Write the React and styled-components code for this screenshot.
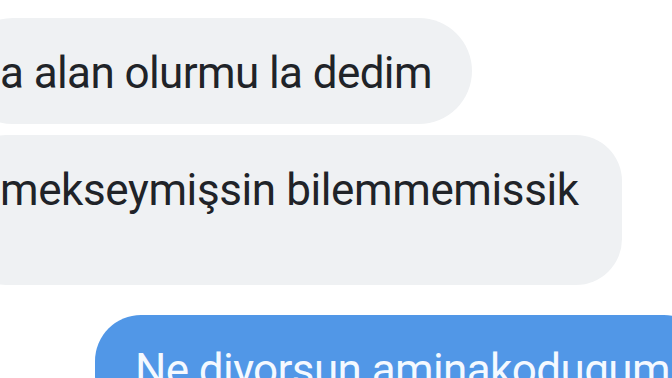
import React from 'react';
import styled, { createGlobalStyle } from 'styled-components';

const GlobalStyle = createGlobalStyle`
  html, body {
    margin: 0;
    padding: 0;
    background: #ffffff;
    overflow: hidden;
  }
  body {
    font-family: Roboto, "Noto Sans", sans-serif;
  }
`;

const Thread = styled.div`
  width: 672px;
  height: 378px;
  overflow: hidden;
  padding-top: 18px;
  box-sizing: border-box;
  display: flex;
  flex-direction: column;
`;

const Row = styled.div`
  display: flex;
  justify-content: flex-start;
  margin-top: ${(p) => p.gap || 0}px;
`;

const Bubble = styled.div`
  flex-shrink: 0;
  white-space: nowrap;
  font-size: 44px;
  line-height: 44px;
  letter-spacing: ${(p) => p.spacing ?? -0.6}px;
  padding: 33px ${(p) => p.padRight || 40}px ${(p) => 29 + (p.extra || 0)}px 40px;
  margin-left: ${(p) => p.offset || 0}px;
  border-radius: ${(p) => p.radius || 46}px;
  background: ${(p) => (p.mine ? '#5197e7' : '#eff1f3')};
  color: ${(p) => (p.mine ? '#f4f9ff' : '#202328')};
`;

const messages = [
  { text: 'a alan olurmu la dedim', offset: -40, radius: 53 },
  { text: 'mekseymişsin bilemmemissik', offset: -40, gap: 11, extra: 44, radius: 46, spacing: -0.4, padRight: 43 },
  { text: 'Ne diyorsun aminakodugum', mine: true, offset: 95, gap: 30, radius: 46 },
];

export default function App() {
  return (
    <>
      <GlobalStyle />
      <Thread>
        {messages.map((m, i) => (
          <Row key={i} gap={m.gap}>
            <Bubble
              mine={m.mine}
              offset={m.offset}
              extra={m.extra}
              radius={m.radius}
              spacing={m.spacing}
              padRight={m.padRight}
            >
              {m.text}
            </Bubble>
          </Row>
        ))}
      </Thread>
    </>
  );
}
